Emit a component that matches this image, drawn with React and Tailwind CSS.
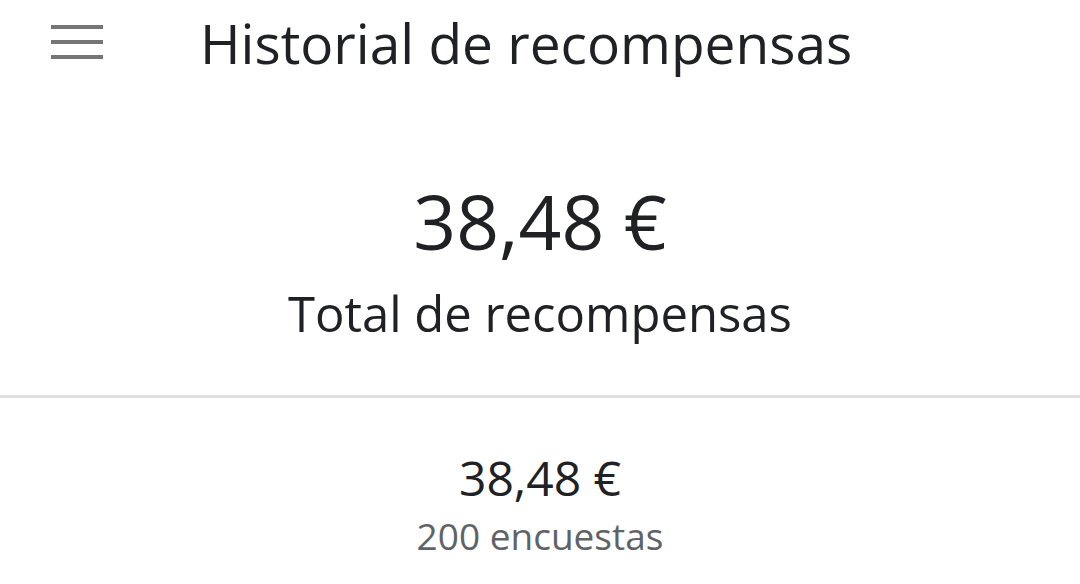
export default function App() {
  return (
    <div className="h-[584px] w-[1080px] overflow-hidden bg-white text-[#202124]" style={{ fontFamily: '"Open Sans", Roboto, sans-serif' }}>
      <header className="flex h-[84px] items-center">
        <button type="button" className="ml-[51px] flex h-[34px] w-[52px] flex-col justify-between">
          <span className="block h-[4px] w-full bg-[#757575]" />
          <span className="block h-[4px] w-full bg-[#757575]" />
          <span className="block h-[4px] w-full bg-[#757575]" />
        </button>
        <h1 className="ml-[97px] text-[55px] leading-none font-normal">Historial de recompensas</h1>
      </header>
      <section className="flex flex-col items-center pt-[100px]">
        <p className="text-[75px] leading-none">38,48 €</p>
        <p className="mt-[30px] text-[49px] leading-none">Total de recompensas</p>
      </section>
      <div className="mt-[57px] h-[3px] bg-[#e0e0e0]" />
      <section className="flex flex-col items-center pt-[56px]">
        <p className="text-[48px] leading-none">38,48 €</p>
        <p className="mt-[15px] text-[37px] leading-none text-[#5f6368]">200 encuestas</p>
      </section>
    </div>
  );
}
